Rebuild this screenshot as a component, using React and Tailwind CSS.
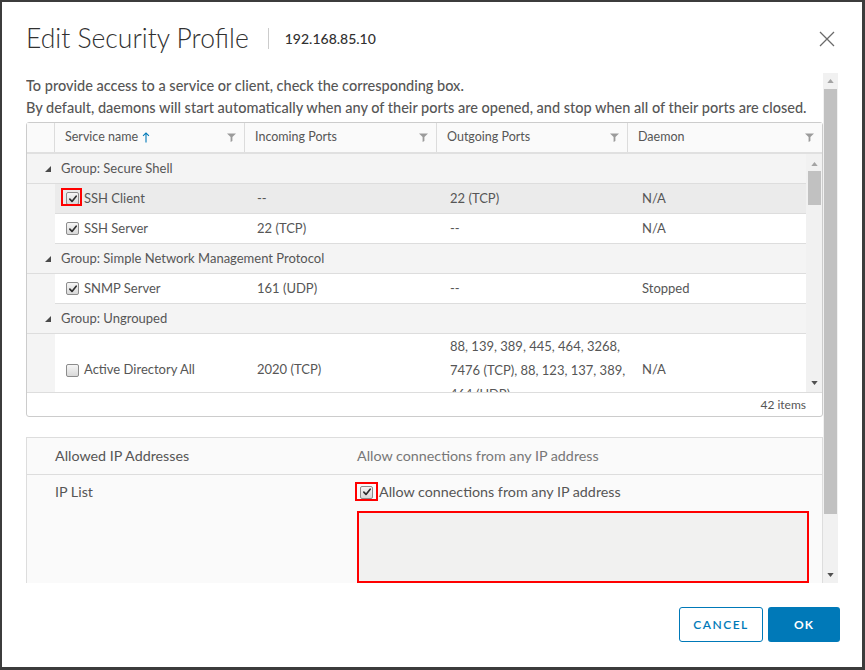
import React from "react";

function Cb({ checked }) {
  return (
    <span className="inline-flex h-[13px] w-[13px] shrink-0 items-center justify-center rounded-[2px] border border-[#8c8c8c] bg-linear-to-b from-[#f6f6f6] to-[#d9d9d9]">
      {checked && (
        <svg viewBox="0 0 12 12" className="h-[10px] w-[10px]">
          <path d="M2.2 6.2 L4.8 8.9 L9.8 2.6" stroke="#2f2f2f" strokeWidth="2" fill="none" strokeLinecap="round" strokeLinejoin="round" />
        </svg>
      )}
    </span>
  );
}

function Funnel() {
  return (
    <svg viewBox="0 0 10 10" className="h-[9px] w-[9px]">
      <path d="M0 0.5 H10 L6 4.5 V9 L4 10 V4.5 Z" fill="#9b9b9b" />
    </svg>
  );
}

function Tri() {
  return (
    <svg viewBox="0 0 6 6" className="h-[6px] w-[6px]">
      <polygon points="6,0 6,6 0,6" fill="#4a4a4a" />
    </svg>
  );
}

function HeadCell({ w, children, last }) {
  return (
    <div className={`flex h-full items-center justify-between pl-[10px] pr-[8px] ${last ? "flex-1" : "border-r border-[#dcdcdc]"} ${w || ""}`}>
      <div className="flex items-center gap-[4px]">{children}</div>
      <Funnel />
    </div>
  );
}

function GroupRow({ label }) {
  return (
    <div className="flex h-[30px] items-center border-b border-[#dddddd] bg-[#f4f4f4]">
      <div className="flex w-[34px] justify-end pr-[10px]">
        <Tri />
      </div>
      <span>{label}</span>
    </div>
  );
}

function ChildRow({ name, inc, out, dae, checked, sel, mark }) {
  return (
    <div className="flex h-[30px]">
      <div className="w-[28px] bg-[#f4f4f4]" />
      <div className={`flex flex-1 items-center border-b border-[#dddddd] ${sel ? "bg-[#ebebeb]" : "bg-white"}`}>
        <div className="flex w-[190px] items-center pl-[11px]">
          <span className="relative flex items-center">
            <Cb checked={checked} />
            {mark && <span className="absolute left-[-5px] top-[-4px] h-[18px] w-[21px] border-2 border-[#ff0000]" />}
          </span>
          <span className="pl-[5px]">{name}</span>
        </div>
        <div className="w-[192px] pl-[12px]">{inc}</div>
        <div className="w-[191px] pl-[13px]">{out}</div>
        <div className="flex-1 pl-[14px]">{dae}</div>
      </div>
    </div>
  );
}

export default function App() {
  return (
    <div className="h-[670px] w-[865px] overflow-hidden bg-[#3c3c3c] pb-[3px] pl-[2px] pr-[3px] pt-[2px] font-[Lato,sans-serif]">
      <div className="flex h-[665px] w-[860px] flex-col bg-white">
        {/* Header */}
        <div className="flex items-center pl-[24px] pr-[27px] pt-[20px]">
          <h1 className="text-[26.5px] font-light leading-[32px] text-[#313131]">Edit Security Profile</h1>
          <span className="ml-[19px] h-[21px] w-px bg-[#cccccc]" />
          <span className="ml-[16px] text-[14px] font-medium text-[#313131]">192.168.85.10</span>
          <div className="flex-1" />
          <svg viewBox="0 0 16 16" className="mt-[2px] h-[16px] w-[16px]">
            <path d="M1 1 L15 15 M15 1 L1 15" stroke="#6a6a6a" strokeWidth="1.3" />
          </svg>
        </div>

        {/* Scroll body */}
        <div className="mx-[24px] mt-[19px] flex h-[510px] overflow-hidden">
          <div className="w-[797px] overflow-hidden">
            <p className="pt-[2px] text-[14.5px] font-medium leading-[22px] text-[#565656]">
              To provide access to a service or client, check the corresponding box.
            </p>
            <p className="text-[14.5px] font-medium leading-[22px] text-[#565656]">
              By default, daemons will start automatically when any of their ports are opened, and stop when all of their ports are closed.
            </p>

            {/* Datagrid */}
            <div className="mt-[3px] rounded-[3px] border border-[#cccccc] text-[13px] text-[#565656]">
              <div className="flex h-[31px] border-b-2 border-[#e0e0e0] bg-[#fafafa] text-[12.5px] text-[#565656]">
                <div className="w-[28px] border-r border-[#dcdcdc]" />
                <HeadCell w="w-[190px]">
                  <span>Service name</span>
                  <svg viewBox="0 0 8 12" className="h-[11px] w-[8px]">
                    <path d="M4 11.5 V1 M0.8 4.2 L4 1 L7.2 4.2" stroke="#0079b8" strokeWidth="1.2" fill="none" />
                  </svg>
                </HeadCell>
                <HeadCell w="w-[192px]"><span>Incoming Ports</span></HeadCell>
                <HeadCell w="w-[191px]"><span>Outgoing Ports</span></HeadCell>
                <HeadCell last><span>Daemon</span></HeadCell>
              </div>

              <div className="flex h-[238px]">
                <div className="flex-1 overflow-hidden">
                  <GroupRow label="Group: Secure Shell" />
                  <ChildRow name="SSH Client" inc="--" out="22 (TCP)" dae="N/A" checked sel mark />
                  <ChildRow name="SSH Server" inc="22 (TCP)" out="--" dae="N/A" checked />
                  <GroupRow label="Group: Simple Network Management Protocol" />
                  <ChildRow name="SNMP Server" inc="161 (UDP)" out="--" dae="Stopped" checked />
                  <GroupRow label="Group: Ungrouped" />
                  <div className="flex h-[72px]">
                    <div className="w-[28px] bg-[#f4f4f4]" />
                    <div className="flex flex-1 items-center bg-white">
                      <div className="flex w-[190px] items-center pl-[11px]">
                        <Cb />
                        <span className="pl-[5px]">Active Directory All</span>
                      </div>
                      <div className="w-[192px] pl-[12px]">2020 (TCP)</div>
                      <div className="w-[191px] pl-[13px] leading-[24px]">
                        88, 139, 389, 445, 464, 3268,
                        <br />
                        7476 (TCP), 88, 123, 137, 389,
                        <br />
                        464 (UDP)
                      </div>
                      <div className="flex-1 pl-[14px]">N/A</div>
                    </div>
                  </div>
                </div>
                {/* inner scrollbar */}
                <div className="flex w-[16px] flex-col items-center bg-[#f1f1f1]">
                  <svg viewBox="0 0 8 5" className="mt-[8px] h-[4px] w-[7px]"><polygon points="0,5 4,0 8,5" fill="#a3a3a3" /></svg>
                  <div className="mt-[5px] h-[34px] w-[13px] bg-[#c1c1c1]" />
                  <div className="flex-1" />
                  <svg viewBox="0 0 8 5" className="mb-[7px] h-[4px] w-[7px]"><polygon points="0,0 8,0 4,5" fill="#505050" /></svg>
                </div>
              </div>

              <div className="flex h-[24px] items-center justify-end border-t border-[#dddddd] pr-[16px] text-[12px]">
                42 items
              </div>
            </div>

            {/* Allowed IP panel */}
            <div className="mt-[20px] border border-[#dddddd] bg-[#fafafa] text-[14.3px] text-[#565656]">
              <div className="flex h-[37px] items-center border-b border-[#dddddd]">
                <div className="w-[330px] pl-[28px]">Allowed IP Addresses</div>
                <div className="text-[#777777]">Allow connections from any IP address</div>
              </div>
              <div className="flex pt-[7px]">
                <div className="w-[330px] pl-[28px] leading-[20px]">IP List</div>
                <div className="flex flex-col">
                  <div className="flex h-[20px] items-center">
                    <span className="relative ml-[3px] flex items-center">
                      <Cb checked />
                      <span className="absolute left-[-5px] top-[-4px] h-[19px] w-[23px] border-2 border-[#ff0000]" />
                    </span>
                    <span className="pl-[6px]">Allow connections from any IP address</span>
                  </div>
                  <div className="mt-[9px] h-[72px] w-[452px] border-2 border-[#ff0000] bg-[#f1f1f0]" />
                </div>
              </div>
            </div>
          </div>

          {/* outer scrollbar */}
          <div className="flex w-[15px] flex-col items-center bg-[#f1f1f1]">
            <svg viewBox="0 0 8 5" className="mt-[6px] h-[4px] w-[7px]"><polygon points="0,5 4,0 8,5" fill="#a3a3a3" /></svg>
            <div className="mt-[6px] h-[425px] w-[13px] bg-[#c1c1c1]" />
            <div className="flex-1" />
            <svg viewBox="0 0 8 5" className="mb-[6px] h-[4px] w-[7px]"><polygon points="0,0 8,0 4,5" fill="#505050" /></svg>
          </div>
        </div>

        {/* Footer */}
        <div className="flex justify-end gap-[5px] pr-[22px] pt-[24px]">
          <button className="h-[35px] w-[84px] rounded-[3px] border border-[#0079b8] bg-white text-[12px] font-semibold tracking-[1.5px] text-[#0079b8]">
            CANCEL
          </button>
          <button className="h-[35px] w-[72px] rounded-[3px] bg-[#0079b8] text-[12px] font-bold tracking-[1px] text-white">
            OK
          </button>
        </div>
      </div>
    </div>
  );
}
